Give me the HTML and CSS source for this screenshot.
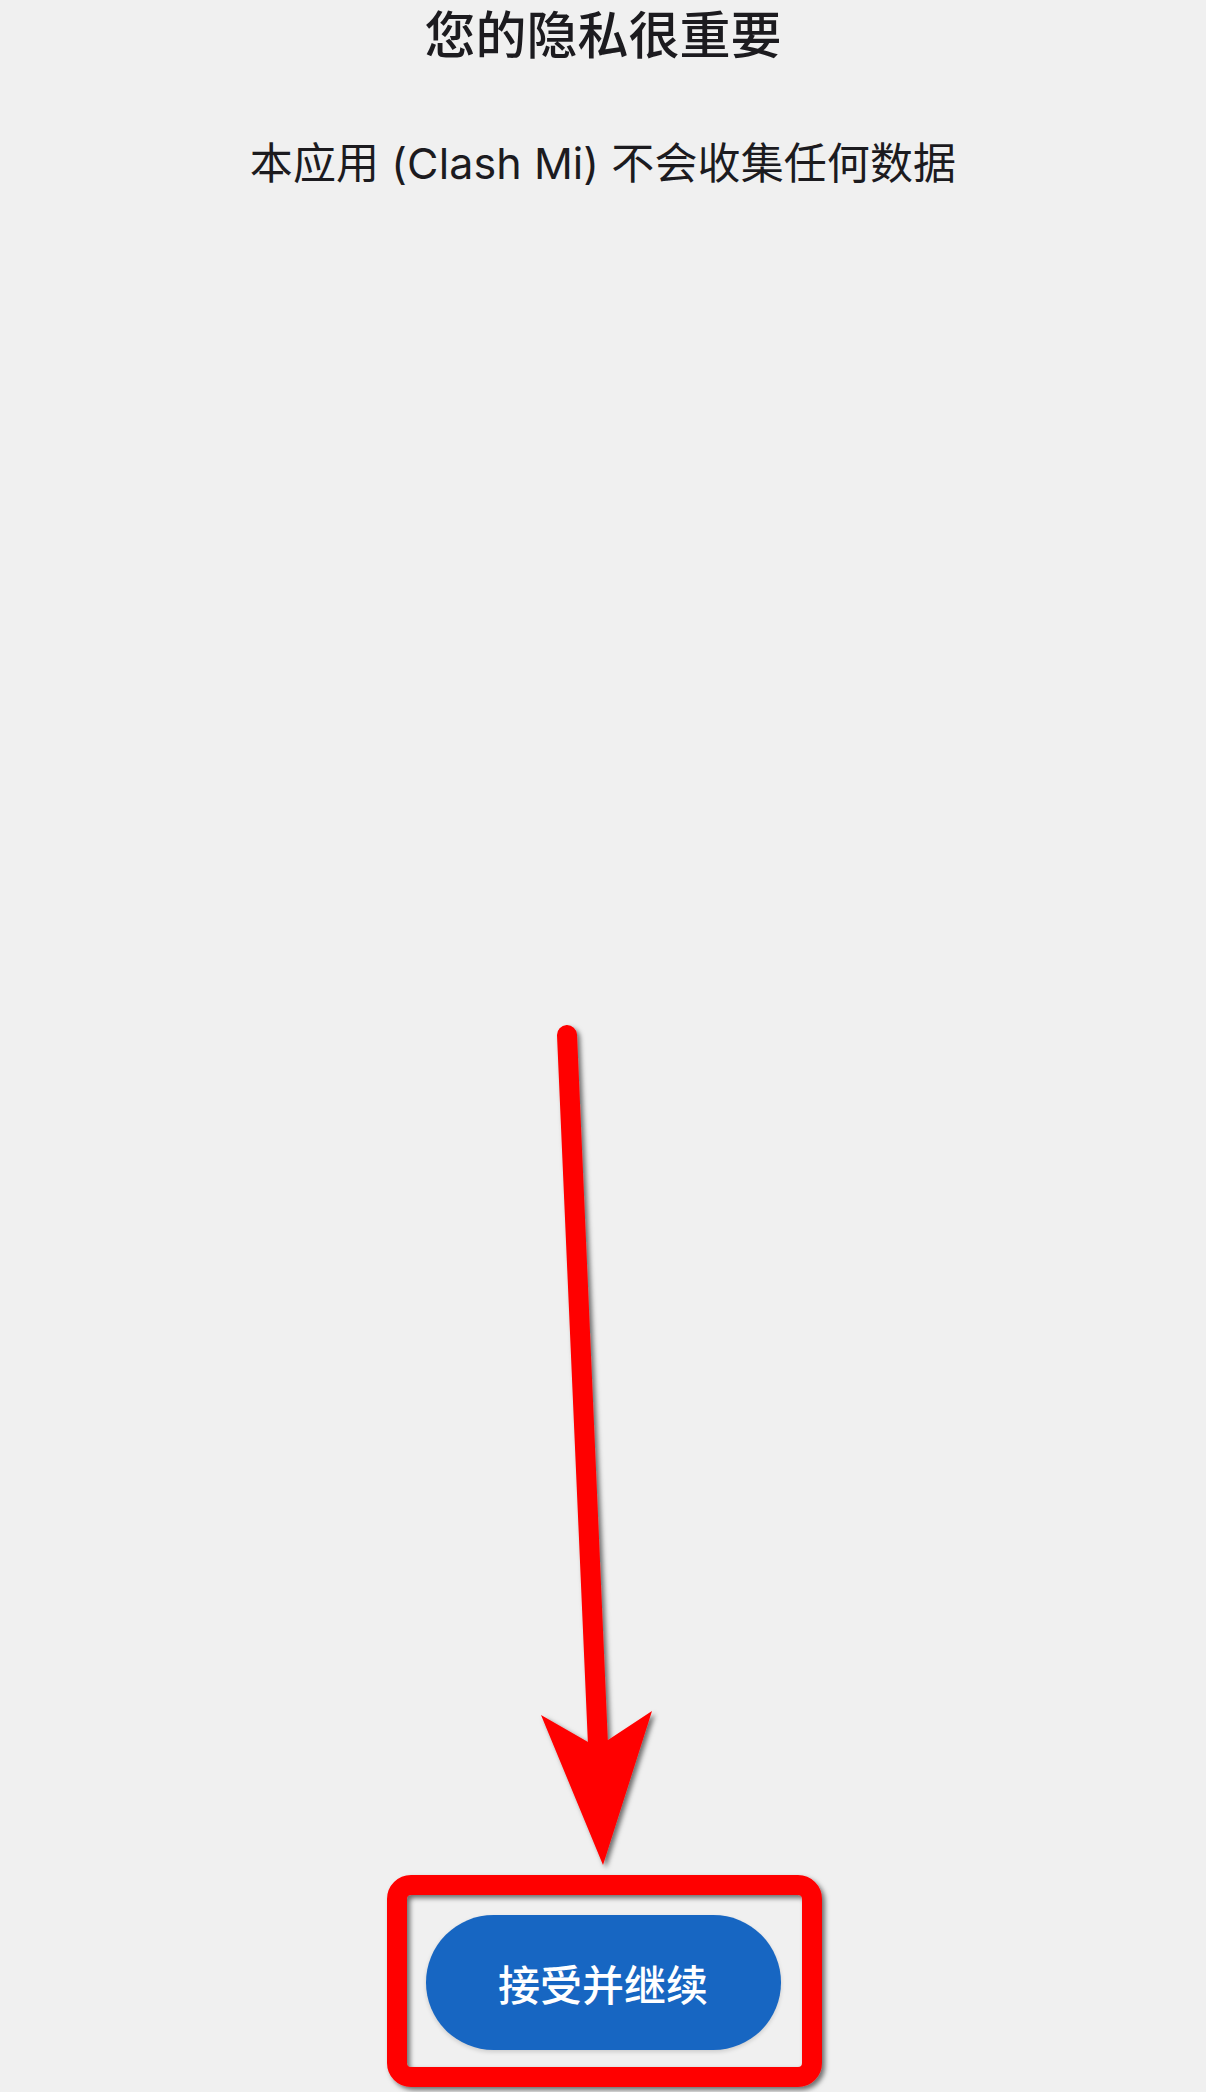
FILE: index.html
```html
<!DOCTYPE html>
<html lang="zh-CN">
<head>
<meta charset="utf-8">
<title>隐私</title>
<link rel="stylesheet" href="styles.css">
</head>
<body>
<main class="screen">
  <h1 class="title">您的隐私很重要</h1>
  <p class="subtitle">本应用 (Clash Mi) 不会收集任何数据</p>
  <div class="spacer"></div>
  <button class="accept">接受并继续</button>
</main>
<svg class="annot" width="1206" height="2092" viewBox="0 0 1206 2092" xmlns="http://www.w3.org/2000/svg">
  <defs>
    <filter id="sh" x="-20%" y="-5%" width="140%" height="110%">
      <feDropShadow dx="3" dy="3" stdDeviation="2.5" flood-color="#000" flood-opacity="0.55"/>
    </filter>
  </defs>
  <g filter="url(#sh)">
    <line x1="567" y1="1035" x2="598" y2="1745" stroke="#ff0000" stroke-width="20" stroke-linecap="round"/>
    <polygon points="541,1715 588,1742 608,1740 652,1711 603,1865" fill="#ff0000"/>
    <rect x="397" y="1885" width="415" height="192" rx="14" ry="14" fill="none" stroke="#ff0000" stroke-width="20"/>
  </g>
</svg>
</body>
</html>
```

FILE: styles.css
```css
html, body {
  margin: 0;
  padding: 0;
}
body {
  background: #f0f0f0;
  width: 1206px;
  height: 2092px;
  overflow: hidden;
  position: relative;
  font-family: "Inter", "Noto Sans CJK SC", sans-serif;
  color: #1c1b1f;
}
.screen {
  height: 2092px;
  box-sizing: border-box;
  display: flex;
  flex-direction: column;
  align-items: center;
  padding-bottom: 42px;
}
.title {
  margin: 0;
  font-family: "Noto Sans CJK SC", sans-serif;
  font-size: 51px;
  font-weight: 500;
  line-height: 64px;
}
.subtitle {
  margin: 72px 0 0;
  font-size: 43px;
  line-height: 54px;
  font-weight: 400;
  letter-spacing: 0.1px;
}
.spacer {
  flex: 1;
}
.accept {
  width: 355px;
  height: 135px;
  border: none;
  border-radius: 68px;
  background: #1766c2;
  color: #ffffff;
  font-family: "Noto Sans CJK SC", sans-serif;
  font-size: 42px;
  font-weight: 500;
  padding: 0;
  box-shadow: 0 2px 4px rgba(0,0,0,0.15);
}
.annot {
  position: absolute;
  left: 0;
  top: 0;
  pointer-events: none;
}
```
